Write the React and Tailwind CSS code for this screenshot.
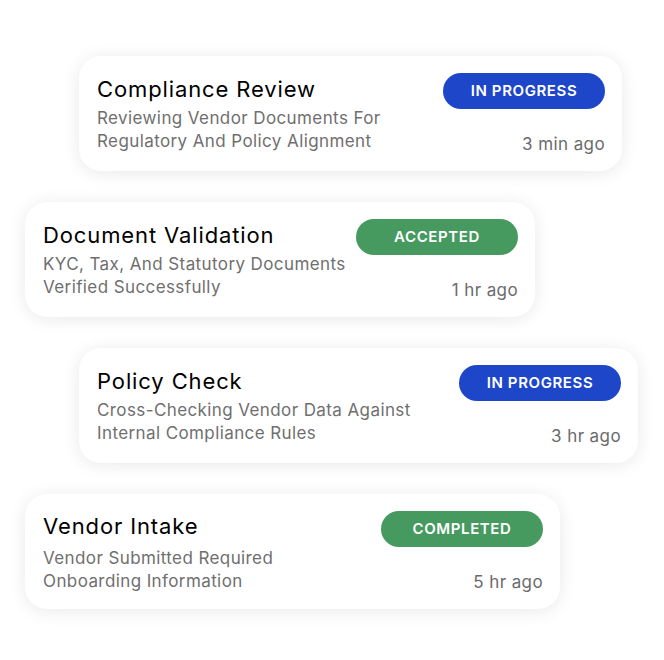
import React from 'react';

const items = [
    {
        title: 'Compliance Review',
        lines: ['Reviewing Vendor Documents For', 'Regulatory And Policy Alignment'],
        status: 'IN PROGRESS',
        tone: 'blue',
        time: '3 min ago',
        box: 'ml-[79px] w-[543px]'
    },
    {
        title: 'Document Validation',
        lines: ['KYC, Tax, And Statutory Documents', 'Verified Successfully'],
        status: 'ACCEPTED',
        tone: 'green',
        time: '1 hr ago',
        box: 'ml-[25px] w-[510px]'
    },
    {
        title: 'Policy Check',
        lines: ['Cross-Checking Vendor Data Against', 'Internal Compliance Rules'],
        status: 'IN PROGRESS',
        tone: 'blue',
        time: '3 hr ago',
        box: 'ml-[79px] w-[559px]'
    },
    {
        title: 'Vendor Intake',
        lines: ['Vendor Submitted Required', 'Onboarding Information'],
        status: 'COMPLETED',
        tone: 'green',
        time: '5 hr ago',
        box: 'ml-[25px] w-[535px]',
        spaced: true
    }
];

const badgeTone = {
    blue: 'bg-[#1e46c9]',
    green: 'bg-[#46995f]'
};

const ActivityCard = ({ item }) => (
    <div className={`${item.box} h-[115px] bg-white rounded-[22px] shadow-[0_2px_18px_rgba(0,0,0,0.09)] pl-[18px] pr-[17px] pt-[17px] pb-[15px] flex justify-between tracking-wide`}>
        <div className={item.spaced ? 'pt-0' : 'pt-[1px]'}>
            <h3 className="text-[22px] leading-[30px] font-normal tracking-[0.04em] text-black">{item.title}</h3>
            <p className={`${item.spaced ? 'mt-[6px]' : 'mt-[3px]'} text-[17px] leading-[23px] text-[#6f6f6f]`}>
                {item.lines[0]}
                <br />
                {item.lines[1]}
            </p>
        </div>

        <div className="flex flex-col items-end justify-between">
            <span className={`${badgeTone[item.tone]} w-[162px] h-[36px] rounded-full flex items-center justify-center text-white text-[15px] font-semibold tracking-[0.04em]`}>
                {item.status}
            </span>
            <span className="text-[17px] leading-[23px] text-[#6b6b6b]">{item.time}</span>
        </div>
    </div>
);

export default function App() {
    return (
        <div className="w-[664px] h-[660px] bg-white font-['Inter',sans-serif] pt-[56px] flex flex-col gap-[31px]">
            {items.map((item) => (
                <ActivityCard key={item.title} item={item} />
            ))}
        </div>
    );
}
